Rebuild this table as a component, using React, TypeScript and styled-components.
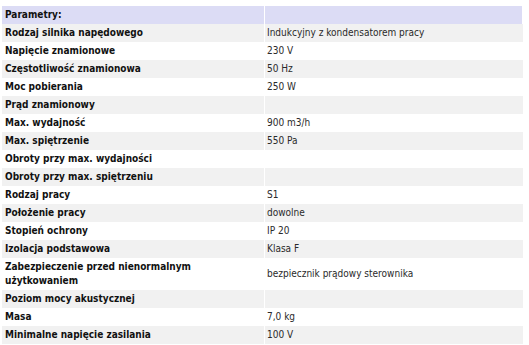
import React from "react";
import styled, { createGlobalStyle } from "styled-components";

const Global = createGlobalStyle`
  html, body { margin: 0; padding: 0; background: #ffffff; }
  body { font-family: "DejaVu Sans Condensed", "DejaVu Sans", Verdana, sans-serif; color: #111; }
`;

const Wrap = styled.div`
  padding: 6px 6px 0 2px;
`;

const Table = styled.table`
  width: 521px;
  table-layout: fixed;
  border-collapse: separate;
  border-spacing: 0 0;
  font-size: 10px;
`;

const HeadCell = styled.th<{ $w?: number }>`
  background: #dcdcf5;
  text-align: left;
  font-weight: bold;
  padding: 2px 3px;
  height: 14px;
  line-height: 14px;
  border-right: 1px solid #ffffff;
  ${(p) => (p.$w ? `width: ${p.$w}px;` : "")}
`;

const Row = styled.tr<{ $alt: boolean }>`
  background: ${(p) => (p.$alt ? "#f1f1f1" : "#ffffff")};
`;

const Label = styled.td`
  padding: 2px 3px;
  line-height: 14px;
  font-weight: bold;
  vertical-align: middle;
  border-right: 1px solid #ffffff;
`;

const Value = styled.td`
  padding: 2px 2px;
  line-height: 14px;
  color: #2a2a2a;
  vertical-align: middle;
`;

const rows: [string, string][] = [
  ["Rodzaj silnika napędowego", "Indukcyjny z kondensatorem pracy"],
  ["Napięcie znamionowe", "230 V"],
  ["Częstotliwość znamionowa", "50 Hz"],
  ["Moc pobierania", "250 W"],
  ["Prąd znamionowy", ""],
  ["Max. wydajność", "900 m3/h"],
  ["Max. spiętrzenie", "550 Pa"],
  ["Obroty przy max. wydajności", ""],
  ["Obroty przy max. spiętrzeniu", ""],
  ["Rodzaj pracy", "S1"],
  ["Położenie pracy", "dowolne"],
  ["Stopień ochrony", "IP 20"],
  ["Izolacja podstawowa", "Klasa F"],
  ["Zabezpieczenie przed nienormalnym użytkowaniem", "bezpiecznik prądowy sterownika"],
  ["Poziom mocy akustycznej", ""],
  ["Masa", "7,0 kg"],
  ["Minimalne napięcie zasilania", "100 V"],
];

export default function App() {
  return (
    <>
      <Global />
      <Wrap>
        <Table>
          <thead>
            <tr>
              <HeadCell $w={256}>Parametry:</HeadCell>
              <HeadCell />
            </tr>
          </thead>
          <tbody>
            {rows.map(([l, v], i) => (
              <Row key={l} $alt={i % 2 === 0}>
                <Label>{l}</Label>
                <Value>{v}</Value>
              </Row>
            ))}
          </tbody>
        </Table>
      </Wrap>
    </>
  );
}
